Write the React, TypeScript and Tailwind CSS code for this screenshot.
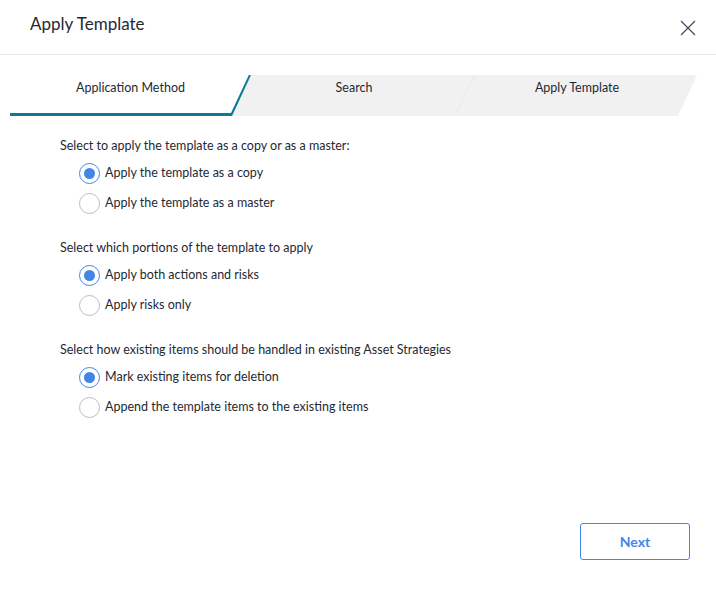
import React, { useState } from 'react';

const font = { fontFamily: 'Lato, "Noto Sans", sans-serif' };

interface Option {
  id: string;
  label: string;
}

interface Group {
  title: string;
  options: Option[];
}

const groups: Group[] = [
  {
    title: 'Select to apply the template as a copy or as a master:',
    options: [
      { id: 'copy', label: 'Apply the template as a copy' },
      { id: 'master', label: 'Apply the template as a master' },
    ],
  },
  {
    title: 'Select which portions of the template to apply',
    options: [
      { id: 'both', label: 'Apply both actions and risks' },
      { id: 'risks', label: 'Apply risks only' },
    ],
  },
  {
    title: 'Select how existing items should be handled in existing Asset Strategies',
    options: [
      { id: 'mark', label: 'Mark existing items for deletion' },
      { id: 'append', label: 'Append the template items to the existing items' },
    ],
  },
];

const Radio: React.FC<{ checked: boolean; label: string; onClick: () => void }> = ({ checked, label, onClick }) => (
  <button onClick={onClick} className="flex items-center h-[30px] gap-[5px] text-left">
    <span
      className={`w-[21px] h-[21px] rounded-full border flex items-center justify-center bg-white ${
        checked ? 'border-[#3f86e8] border-[1.5px]' : 'border-[#bdbdbd]'
      }`}
    >
      {checked && <span className="w-[11px] h-[11px] rounded-full bg-[#3f86e8]" />}
    </span>
    <span className="text-[12.5px] text-[#1f2933]">{label}</span>
  </button>
);

export default function App() {
  const [values, setValues] = useState<string[]>(['copy', 'both', 'mark']);

  return (
    <div className="w-[716px] h-[614px] bg-white flex flex-col" style={font}>
      {/* Header */}
      <div className="h-[55px] border-b border-[#e6e6e6] flex items-center justify-between pl-[30px] pr-[20px]">
        <h1 className="text-[17px] text-[#1f2933] -mt-[7px]">Apply Template</h1>
        <button className="w-[16px] h-[16px] text-[#3a4a5a] mt-[1px]">
          <svg viewBox="0 0 16 16" className="w-[16px] h-[16px]" fill="none" stroke="currentColor" strokeWidth="1.2">
            <path d="M1 1 L15 15 M15 1 L1 15" />
          </svg>
        </button>
      </div>

      {/* Step tabs */}
      <div className="flex mt-[20px] ml-[10px] h-[41px] text-[12.5px] text-[#1f2933]">
        <div className="relative w-[241px] flex items-center justify-center pr-[19px] pb-[14px]">
          <span className="ml-[19px]">Application Method</span>
          <svg className="absolute inset-0 w-full h-full" viewBox="0 0 241 41" preserveAspectRatio="none">
            <path d="M0 39.5 L222 39.5 L240.5 0" fill="none" stroke="#0b7a93" strokeWidth="3" />
          </svg>
        </div>
        <div className="-ml-[19px] w-[242px] bg-[#f1f1f1] flex items-center justify-center pb-[14px] [clip-path:polygon(19px_0,100%_0,calc(100%-19px)_100%,0_100%)]">
          <span className="ml-[2px]">Search</span>
        </div>
        <div className="relative -ml-[19px] w-[242px] bg-[#f1f1f1] flex items-center justify-center pb-[14px] [clip-path:polygon(19px_0,100%_0,calc(100%-19px)_100%,0_100%)]">
          <svg className="absolute inset-0 w-full h-full" viewBox="0 0 242 41" preserveAspectRatio="none">
            <path d="M19 0 L0 41" fill="none" stroke="#dedede" strokeWidth="1" />
          </svg>
          <span className="ml-[2px]">Apply Template</span>
        </div>
      </div>

      {/* Options */}
      <div className="flex flex-col pl-[60px] pt-[20px] gap-[20px]">
        {groups.map((g, gi) => (
          <div key={g.title} className="flex flex-col">
            <div className="text-[12.5px] text-[#1f2933] h-[20px] leading-[20px] mb-[2px]">{g.title}</div>
            <div className="flex flex-col pl-[19px]">
              {g.options.map((o) => (
                <Radio
                  key={o.id}
                  label={o.label}
                  checked={values[gi] === o.id}
                  onClick={() => setValues((v) => v.map((x, i) => (i === gi ? o.id : x)))}
                />
              ))}
            </div>
          </div>
        ))}
      </div>

      {/* Footer */}
      <div className="mt-auto flex justify-end pr-[26px] pb-[54px]">
        <button className="w-[110px] h-[37px] border-[1.5px] border-[#3f86e8] rounded-[3px] text-[#3f86e8] text-[14px] font-bold">
          Next
        </button>
      </div>
    </div>
  );
}
